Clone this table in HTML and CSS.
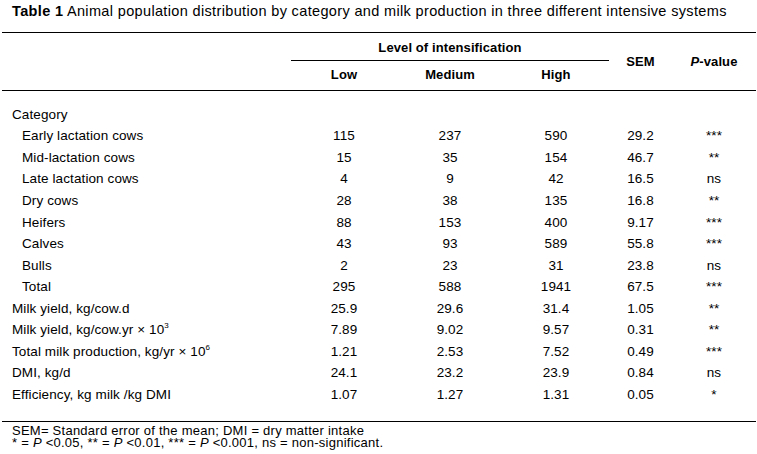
FILE: index.html
```html
<!DOCTYPE html>
<html>
<head>
<meta charset="utf-8">
<link rel="stylesheet" href="styles.css">
</head>
<body>
<div class="caption"><b>Table 1</b> Animal population distribution by category and milk production in three different intensive systems</div>
<table class="tbl">
  <thead>
    <tr class="h1">
      <th class="lab" rowspan="2"></th>
      <th class="grp" colspan="3">Level of intensification</th>
      <th class="sem" rowspan="2">SEM</th>
      <th class="pv" rowspan="2"><i>P</i>-value</th>
    </tr>
    <tr class="h2">
      <th class="c1">Low</th>
      <th class="c2">Medium</th>
      <th class="c3">High</th>
    </tr>
  </thead>
  <tbody>
    <tr class="spacer"><td colspan="6"></td></tr>
    <tr><td class="lab">Category</td><td></td><td></td><td></td><td></td><td></td></tr>
    <tr><td class="lab ind">Early lactation cows</td><td>115</td><td>237</td><td>590</td><td>29.2</td><td>***</td></tr>
    <tr><td class="lab ind">Mid-lactation cows</td><td>15</td><td>35</td><td>154</td><td>46.7</td><td>**</td></tr>
    <tr><td class="lab ind">Late lactation cows</td><td>4</td><td>9</td><td>42</td><td>16.5</td><td>ns</td></tr>
    <tr><td class="lab ind">Dry cows</td><td>28</td><td>38</td><td>135</td><td>16.8</td><td>**</td></tr>
    <tr><td class="lab ind">Heifers</td><td>88</td><td>153</td><td>400</td><td>9.17</td><td>***</td></tr>
    <tr><td class="lab ind">Calves</td><td>43</td><td>93</td><td>589</td><td>55.8</td><td>***</td></tr>
    <tr><td class="lab ind">Bulls</td><td>2</td><td>23</td><td>31</td><td>23.8</td><td>ns</td></tr>
    <tr><td class="lab ind">Total</td><td>295</td><td>588</td><td>1941</td><td>67.5</td><td>***</td></tr>
    <tr><td class="lab">Milk yield, kg/cow.d</td><td>25.9</td><td>29.6</td><td>31.4</td><td>1.05</td><td>**</td></tr>
    <tr><td class="lab">Milk yield, kg/cow.yr × 10<sup>3</sup></td><td>7.89</td><td>9.02</td><td>9.57</td><td>0.31</td><td>**</td></tr>
    <tr><td class="lab">Total milk production, kg/yr × 10<sup>6</sup></td><td>1.21</td><td>2.53</td><td>7.52</td><td>0.49</td><td>***</td></tr>
    <tr><td class="lab">DMI, kg/d</td><td>24.1</td><td>23.2</td><td>23.9</td><td>0.84</td><td>ns</td></tr>
    <tr><td class="lab">Efficiency, kg milk /kg DMI</td><td>1.07</td><td>1.27</td><td>1.31</td><td>0.05</td><td>*</td></tr>
    <tr class="spacer end"><td colspan="6"></td></tr>
  </tbody>
</table>
<div class="notes">
  <div>SEM= Standard error of the mean; DMI = dry matter intake</div>
  <div>* = <i>P</i> &lt;0.05, ** = <i>P</i> &lt;0.01, *** = <i>P</i> &lt;0.001, ns = non-significant.</div>
</div>
</body>
</html>
```
FILE: styles.css
```css
html, body {
  margin: 0;
  padding: 0;
  background: #fff;
}
body {
  font-family: "Liberation Sans", Arial, sans-serif;
  color: #000;
  font-size: 13.5px;
  letter-spacing: 0.1px;
  width: 757px;
  height: 454px;
  overflow: hidden;
}
.caption {
  font-size: 14.5px;
  letter-spacing: 0.35px;
  padding: 2px 0 0 12px;
  height: 31px;
  line-height: 18px;
  box-sizing: border-box;
  white-space: nowrap;
}
.tbl {
  margin: 1px 0 0 2px;
  width: 754px;
  border-collapse: collapse;
  table-layout: fixed;
}
.tbl th, .tbl td {
  padding: 0;
  text-align: center;
  font-weight: normal;
  white-space: nowrap;
}
.tbl th {
  font-weight: bold;
  font-size: 13px;
}
.tbl th.pv i { font-weight: bold; }
.tbl thead tr.h1 th { border-top: 1px solid #000; height: 26px; }
.tbl thead tr.h1 th.grp { border-bottom: 1px solid #000; vertical-align: middle; padding-top: 1px; }
.tbl thead tr.h2 th { height: 26px; border-bottom: 1px solid #000; padding-bottom: 3px; }
.tbl thead th.lab, .tbl thead th.sem, .tbl thead th.pv { border-bottom: 1px solid #000; }
.tbl th.lab { width: 289px; }
.tbl th.c1 { width: 110px; }
.tbl th.c2 { width: 108px; }
.tbl th.c3 { width: 100px; }
.tbl th.sem { width: 63px; }
.tbl th.pv { width: 84px; }
.tbl tbody tr { height: 21.55px; }
.tbl tbody tr.spacer { height: 13px; }
.tbl tbody tr.spacer.end { height: 16px; border-bottom: 1px solid #000; }
.tbl td.lab {
  text-align: left;
  padding-left: 10px;
}
.tbl td.lab.ind { padding-left: 20px; }
sup {
  font-size: 8px;
  vertical-align: 6px;
  line-height: 0;
}
.notes {
  padding: 3px 0 0 12px;
  font-size: 13px;
  letter-spacing: 0.25px;
  line-height: 12px;
}
```
